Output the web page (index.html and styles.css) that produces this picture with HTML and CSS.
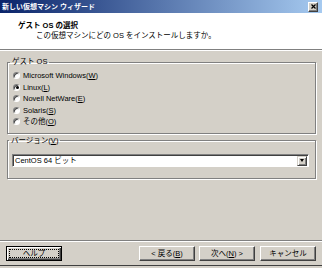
FILE: index.html
```html
<!DOCTYPE html>
<html>
<head>
    <meta charset="UTF-8">
    <title>新しい仮想マシン ウィザード</title>
    <link rel="stylesheet" href="styles.css">
</head>
<body>
    <div class="titlebar">
        <span class="title">新しい仮想マシン ウィザード</span>
        <div class="close">
            <svg width="5" height="5" viewBox="0 0 5 5"><path d="M0.5 0.5L4.5 4.5M4.5 0.5L0.5 4.5" stroke="#000" stroke-width="1.2"/></svg>
        </div>
    </div>
    <div class="header">
        <div class="heading">ゲスト OS の選択</div>
        <div class="subheading">この仮想マシンにどの OS をインストールしますか。</div>
    </div>

    <div class="content">
        <fieldset class="group">
            <legend>ゲスト OS</legend>
            <label class="radio"><input type="radio" name="os"> Microsoft Windows(<u>W</u>)</label>
            <label class="radio"><input type="radio" name="os" checked> Linux(<u>L</u>)</label>
            <label class="radio"><input type="radio" name="os"> Novell NetWare(<u>E</u>)</label>
            <label class="radio"><input type="radio" name="os"> Solaris(<u>S</u>)</label>
            <label class="radio"><input type="radio" name="os"> その他(<u>O</u>)</label>
        </fieldset>

        <fieldset class="group version">
            <legend>バージョン(<u>V</u>)</legend>
            <div class="select">
                <span class="value">CentOS 64 ビット</span>
                <span class="arrow"></span>
            </div>
        </fieldset>
    </div>

    <div class="footer">
        <button class="btn default"><span>ヘルプ</span></button>
        <div class="spacer"></div>
        <button class="btn">&lt; 戻る(<u>B</u>)</button>
        <button class="btn">次へ(<u>N</u>) &gt;</button>
        <button class="btn cancel">キャンセル</button>
    </div>
</body>
</html>
```

FILE: styles.css
```css
body {
    margin: 0;
    width: 322px;
    height: 268px;
    background: #d4d0c8;
    font-family: "Liberation Sans", "Noto Sans CJK JP", sans-serif;
    font-size: 7.5px;
    line-height: 9px;
    color: #000;
    display: flex;
    flex-direction: column;
    overflow: hidden;
}
.titlebar {
    height: 13px;
    flex-shrink: 0;
    background: linear-gradient(to right, #0a246a, #a6caf0);
    display: flex;
    align-items: center;
    padding: 0 4px 0 2px;
}
.title {
    flex: 1;
    color: #fff;
    font-weight: bold;
    font-size: 7px;
}
.close {
    flex: 0 0 10px;
    width: 10px;
    height: 10px;
    box-sizing: border-box;
    background: #d4d0c8;
    border: 1px solid;
    border-color: #fff #404040 #404040 #fff;
    box-shadow: inset -1px -1px 0 #808080;
    display: flex;
    align-items: center;
    justify-content: center;
}
.close svg {
    display: block;
}
.header {
    flex-shrink: 0;
    background: #fff;
    height: 37px;
    border-bottom: 1px solid #808080;
    box-shadow: 0 1px 0 #fff;
    box-sizing: border-box;
    padding-top: 8px;
}
.heading {
    font-weight: bold;
    margin-left: 18px;
    line-height: 10px;
}
.subheading {
    margin-left: 36px;
    line-height: 10px;
}
.content {
    flex: 1;
    padding: 8px 6px 0 7px;
}
.group {
    margin: 0;
    border: 1px solid #808080;
    box-shadow: inset 1px 1px 0 #fff, 1px 1px 0 #fff;
    padding: 4px 4px 5px 5px;
}
.group legend {
    padding: 0 2px;
    margin-left: -3px;
    height: 8px;
    line-height: 8px;
}
.radio {
    display: flex;
    align-items: center;
    height: 11.5px;
}
.radio input {
    appearance: none;
    width: 7px;
    height: 7px;
    margin: 0 3px 0 0;
    border-radius: 50%;
    background: #fff;
    border: 1px solid;
    border-color: #808080 #fff #fff #808080;
    box-shadow: inset 1px 1px 0 #404040;
    box-sizing: border-box;
    position: relative;
}
.radio input:checked::after {
    content: "";
    position: absolute;
    left: 1.5px;
    top: 1.5px;
    width: 3px;
    height: 3px;
    border-radius: 50%;
    background: #000;
}
.version {
    margin-top: 3px;
    padding: 9px 6px 11px 4px;
}
.select {
    height: 13px;
    background: #fff;
    border: 1px solid;
    border-color: #808080 #fff #fff #808080;
    box-shadow: inset 1px 1px 0 #404040;
    box-sizing: border-box;
    display: flex;
    align-items: center;
    padding: 1px 1px 0 2px;
}
.value {
    flex: 1;
}
.arrow {
    width: 10px;
    height: 10px;
    background: #d4d0c8;
    box-sizing: border-box;
    border: 1px solid;
    border-color: #d4d0c8 #404040 #404040 #d4d0c8;
    box-shadow: inset 1px 1px 0 #fff, inset -1px -1px 0 #808080;
    display: flex;
    align-items: center;
    justify-content: center;
}
.arrow::after {
    content: "";
    border-left: 2.5px solid transparent;
    border-right: 2.5px solid transparent;
    border-top: 3px solid #000;
}
.footer {
    flex-shrink: 0;
    border-top: 1px solid #808080;
    box-shadow: inset 0 1px 0 #fff;
    border-bottom: 1px solid #404040;
    display: flex;
    gap: 4px;
    padding: 5px 6px 4px 6px;
    margin-bottom: 2px;
}
.spacer {
    flex: 1;
}
.btn {
    width: 56px;
    height: 15px;
    padding: 0;
    font: inherit;
    background: #d4d0c8;
    border: 1px solid;
    border-color: #fff #404040 #404040 #fff;
    box-shadow: inset -1px -1px 0 #808080;
}
.btn.cancel {
    margin-left: 1px;
}
.btn.default {
    border: 1px solid #000;
    box-shadow: inset 1px 1px 0 #fff, inset -1px -1px 0 #404040, inset -2px -2px 0 #808080;
    padding: 2px;
}
.btn.default span {
    display: flex;
    align-items: center;
    justify-content: center;
    height: 100%;
    box-sizing: border-box;
    border: 1px dotted #000;
}
```
